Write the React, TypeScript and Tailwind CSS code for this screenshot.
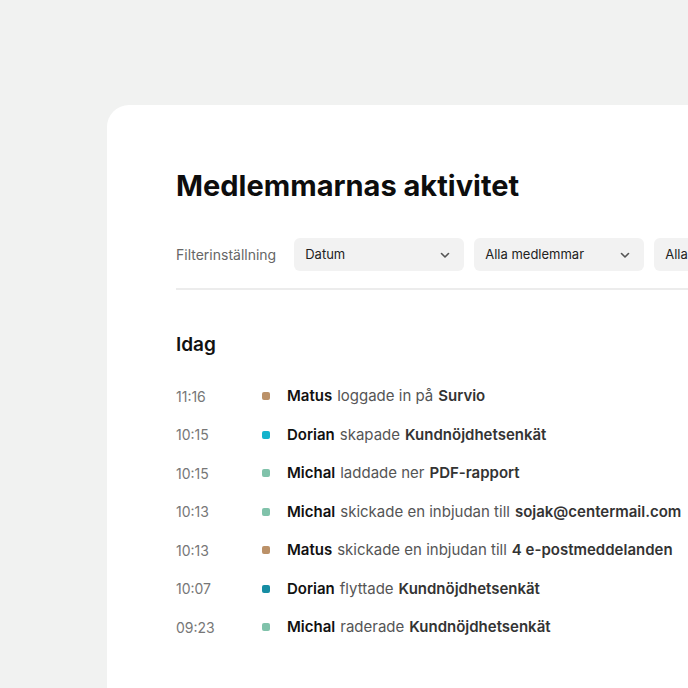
import React from 'react';

interface Activity {
  time: string;
  color: string;
  name: string;
  verb: string;
  object: string;
}

const activities: Activity[] = [
  { time: '11:16', color: 'bg-[#bb9168]', name: 'Matus', verb: 'loggade in på', object: 'Survio' },
  { time: '10:15', color: 'bg-[#14b3cc]', name: 'Dorian', verb: 'skapade', object: 'Kundnöjdhetsenkät' },
  { time: '10:15', color: 'bg-[#80c2aa]', name: 'Michal', verb: 'laddade ner', object: 'PDF-rapport' },
  { time: '10:13', color: 'bg-[#80c2aa]', name: 'Michal', verb: 'skickade en inbjudan till', object: 'sojak@centermail.com' },
  { time: '10:13', color: 'bg-[#bb9168]', name: 'Matus', verb: 'skickade en inbjudan till', object: '4 e-postmeddelanden' },
  { time: '10:07', color: 'bg-[#168da3]', name: 'Dorian', verb: 'flyttade', object: 'Kundnöjdhetsenkät' },
  { time: '09:23', color: 'bg-[#80c2aa]', name: 'Michal', verb: 'raderade', object: 'Kundnöjdhetsenkät' },
];

function Chevron() {
  return (
    <svg width="12" height="12" viewBox="0 0 12 12" fill="none" className="shrink-0">
      <path d="M2.5 4.5L6 8L9.5 4.5" stroke="#555" strokeWidth="1.6" strokeLinecap="round" strokeLinejoin="round" />
    </svg>
  );
}

function Select({ label }: { label: string }) {
  return (
    <div className="flex h-[33px] w-[170px] shrink-0 items-center justify-between rounded-md bg-[#f2f2f2] pl-[11px] pr-[13px]">
      <span className="text-[13px] text-[#222]">{label}</span>
      <Chevron />
    </div>
  );
}

export default function App() {
  return (
    <div
      className="h-[688px] w-[688px] overflow-hidden bg-[#f1f2f1] pl-[107px] pt-[105px]"
      style={{ fontFamily: 'Inter, "Noto Sans", sans-serif' }}
    >
      <div className="h-[640px] w-[700px] overflow-hidden rounded-tl-[22px] bg-white pl-[69px] pt-[64px]">
        <h1 className="text-[29px] font-bold leading-[34px] text-[#0d0d0d]">
          Medlemmarnas aktivitet
        </h1>

        <div className="mt-[35px] flex items-center gap-[10px] whitespace-nowrap">
          <span className="mr-[8px] text-[14px] text-[#666]">Filterinställning</span>
          <Select label="Datum" />
          <Select label="Alla medlemmar" />
          <Select label="Alla typer" />
        </div>

        <div className="mt-[17px] h-[2px] bg-[#ececec]" />

        <h2 className="mt-[43px] text-[19px] font-semibold leading-[24px] text-[#111]">Idag</h2>

        <ul className="mt-[20px] flex flex-col">
          {activities.map((a, i) => (
            <li key={i} className="flex h-[38.5px] items-center whitespace-nowrap text-[15px]">
              <span className="w-[86px] text-[14px] text-[#777]">{a.time}</span>
              <span className={`h-[8px] w-[8px] rounded-[2px] ${a.color}`} />
              <span className="ml-[17px] font-semibold text-[#111]">{a.name}</span>
              <span className="ml-[5px] text-[#555]">{a.verb}</span>
              <span className="ml-[5px] font-semibold text-[#333]">{a.object}</span>
            </li>
          ))}
        </ul>
      </div>
    </div>
  );
}
